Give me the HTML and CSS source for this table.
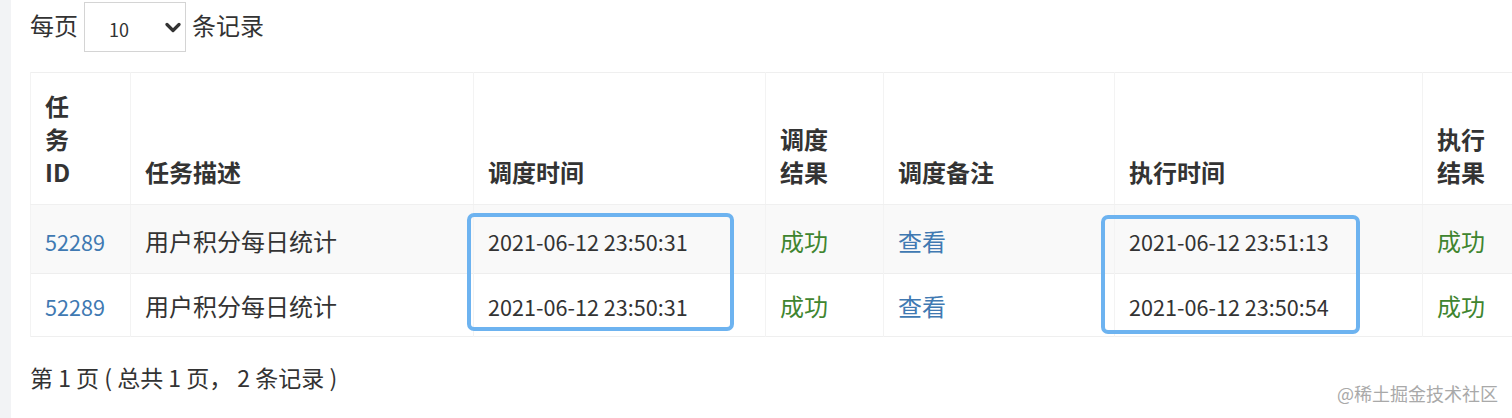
FILE: index.html
```html
<!DOCTYPE html>
<html lang="zh-CN">
<head>
<meta charset="utf-8">
<title>调度日志</title>
<link rel="stylesheet" href="styles.css">
</head>
<body>
<div class="page">
  <div class="sidebar"></div>
  <div class="content">
    <div class="length-row">
      <span class="lbl">每页</span>
      <div class="select">
        <span class="select-value">10</span>
        <svg class="chevron" width="16" height="11" viewBox="0 0 16 11"><path d="M2 2.5 L8 8.5 L14 2.5" fill="none" stroke="#333" stroke-width="3.2" stroke-linecap="round" stroke-linejoin="round"/></svg>
      </div>
      <span class="lbl">条记录</span>
    </div>
    <div class="table-wrap">
      <table class="log-table">
        <colgroup>
          <col class="c-id"><col class="c-desc"><col class="c-time"><col class="c-res"><col class="c-note"><col class="c-exec"><col class="c-eres">
        </colgroup>
        <thead>
          <tr>
            <th>任<br>务<br>ID</th>
            <th>任务描述</th>
            <th>调度时间</th>
            <th>调度<br>结果</th>
            <th>调度备注</th>
            <th>执行时间</th>
            <th>执行<br>结果</th>
          </tr>
        </thead>
        <tbody>
          <tr class="odd">
            <td><a class="link num">52289</a></td>
            <td>用户积分每日统计</td>
            <td><span class="num">2021-06-12 23:50:31</span></td>
            <td class="ok">成功</td>
            <td><a class="link">查看</a></td>
            <td><span class="num">2021-06-12 23:51:13</span></td>
            <td class="ok">成功</td>
          </tr>
          <tr class="even">
            <td><a class="link num">52289</a></td>
            <td>用户积分每日统计</td>
            <td><span class="num">2021-06-12 23:50:31</span></td>
            <td class="ok">成功</td>
            <td><a class="link">查看</a></td>
            <td><span class="num">2021-06-12 23:50:54</span></td>
            <td class="ok">成功</td>
          </tr>
        </tbody>
      </table>
      <div class="mark mark-a"></div>
      <div class="mark mark-b"></div>
    </div>
    <div class="info">第 1 页 ( 总共 1 页， 2 条记录 )</div>
  </div>
</div>
<div class="watermark">@稀土掘金技术社区</div>
</body>
</html>
```

FILE: styles.css
```css
html, body {
  margin: 0;
  padding: 0;
  height: 100%;
  overflow: hidden;
  background: #fff;
}
body {
  font-family: "Noto Sans CJK SC", "Noto Sans", sans-serif;
  font-size: 24px;
  line-height: 33px;
  color: #333;
  position: relative;
}
.page {
  display: flex;
  height: 100%;
}
.sidebar {
  width: 11px;
  flex: none;
  background: #f2f3f5;
}
.content {
  flex: 1;
  min-width: 0;
  overflow: hidden;
  padding: 2px 0 0 19px;
}
.length-row {
  display: flex;
  align-items: center;
  gap: 6px;
  height: 50px;
}
.lbl {
  margin-bottom: 6px;
}
.select {
  box-sizing: border-box;
  width: 102px;
  height: 50px;
  border: 1px solid #d4d4d4;
  background: #fff;
  display: flex;
  align-items: center;
  justify-content: space-between;
  padding: 0 4px 0 24px;
}
.select-value {
  font-size: 18px;
  line-height: 20px;
  padding-top: 4px;
}
.chevron {
  display: block;
}
.table-wrap {
  position: relative;
  margin-top: 20px;
  width: 1700px;
}
.log-table {
  table-layout: fixed;
  border-collapse: collapse;
  width: 1592px;
  border: 1px solid #efefef;
}
.c-id { width: 100px; }
.c-desc { width: 343px; }
.c-time { width: 292px; }
.c-res { width: 118px; }
.c-note { width: 231px; }
.c-exec { width: 308px; }
.c-eres { width: 200px; }
.log-table th,
.log-table td {
  text-align: left;
  padding: 0 14px;
  border-left: 1px solid #f3f3f3;
  border-right: 1px solid #f3f3f3;
}
.log-table th {
  font-weight: 700;
  vertical-align: bottom;
  padding-top: 16px;
  padding-bottom: 16px;
  border-bottom: 1px solid #f0f0f0;
}
.log-table td {
  vertical-align: middle;
  border-top: 1px solid #eeeeee;
  white-space: nowrap;
  line-height: 33px;
}
.log-table tr.odd td {
  background: #f9f9f9;
  height: 66px;
  padding-top: 2px;
}
.log-table tr.even td {
  height: 62px;
}
.num {
  font-size: 21.6px;
  line-height: 20px;
}
.link {
  color: #4079b2;
  text-decoration: none;
}
.ok {
  color: #3f852f;
}
.mark {
  position: absolute;
  box-sizing: border-box;
  border: 4px solid #6db3f0;
  border-radius: 7px;
}
.mark-a {
  left: 437px;
  top: 141px;
  width: 267px;
  height: 118px;
}
.mark-b {
  left: 1071px;
  top: 143px;
  width: 259px;
  height: 119px;
}
.info {
  margin-top: 24px;
  font-size: 23px;
}
.watermark {
  position: absolute;
  right: 14px;
  bottom: 14px;
  font-size: 18px;
  line-height: 22px;
  color: #a9a9a9;
  font-family: "Noto Sans CJK SC", sans-serif;
}
```
